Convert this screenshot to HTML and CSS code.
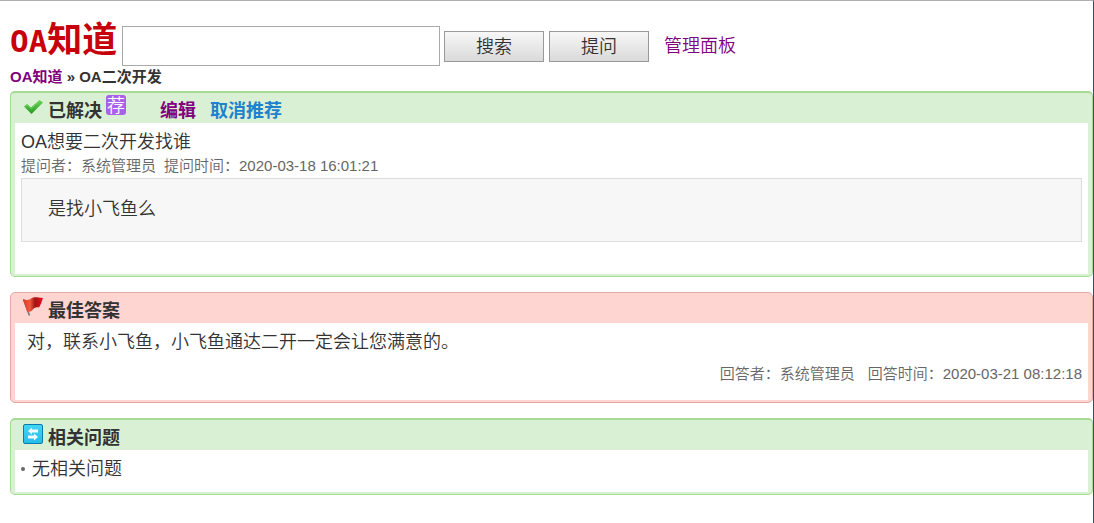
FILE: index.html
```html
<!DOCTYPE html>
<html lang="zh-CN">
<head>
    <meta charset="UTF-8">
    <meta name="viewport" content="width=device-width, initial-scale=1.0">
    <title>OA知道</title>
    <link rel="stylesheet" href="styles.css">
</head>
<body>
    <form class="search-bar" onsubmit="return false">
        <div class="logo"><span class="logo-en">OA</span>知道</div>
        <input class="search-input" type="text" aria-label="搜索">
        <button class="btn" type="submit">搜索</button>
        <button class="btn" type="button">提问</button>
        <a class="manage" href="#">管理面板</a>
    </form>

    <div class="crumb"><a href="#">OA知道</a> » OA二次开发</div>

    <div class="panel green">
        <div class="panel-title">
            <svg class="icon" width="20" height="20" viewBox="0 0 20 20">
                <defs>
                    <linearGradient id="tick" x1="0" y1="0" x2="0" y2="1">
                        <stop offset="0" stop-color="#6fd45c"/>
                        <stop offset="1" stop-color="#249a20"/>
                    </linearGradient>
                </defs>
                <path d="M1 9.5 4 7l4 3.5L16.5 3 20 5.5 8.5 17z" fill="url(#tick)"/>
                <path d="M2 9.5 4.2 8 8 11.5 16.5 4" fill="none" stroke="#6fd05c" stroke-width="1"/>
            </svg>
            <h2>已解决</h2>
            <span class="tag">荐</span>
            <a class="edit" href="#">编辑</a>
            <a class="cancel" href="#">取消推荐</a>
        </div>
        <div class="panel-body ask">
            <div class="question">OA想要二次开发找谁</div>
            <div class="info"><span>提问者：系统管理员</span><span>提问时间：2020-03-18 16:01:21</span></div>
            <div class="detail">是找小飞鱼么</div>
        </div>
    </div>

    <div class="panel red">
        <div class="panel-title">
            <svg class="icon" width="20" height="20" viewBox="0 0 20 20">
                <defs>
                    <linearGradient id="flag" x1="0" y1="0" x2="1" y2="0">
                        <stop offset="0" stop-color="#d83a28"/>
                        <stop offset="0.35" stop-color="#f0583c"/>
                        <stop offset="0.6" stop-color="#a01414"/>
                        <stop offset="0.8" stop-color="#c81018"/>
                        <stop offset="1" stop-color="#f00c2c"/>
                    </linearGradient>
                </defs>
                <path d="M.5 2.5 6.5 18.5" stroke="#777" stroke-width="1.6"/>
                <path d="M0 2c3 1 5.500 1.500 8-.5 3-2 6-1 12-.5-1.500 4-2 6.500-4 9.500-3-.5-5 0-7 3-1.500 1.500-3 1.500-5 1z" fill="url(#flag)"/>
            </svg>
            <h2>最佳答案</h2>
        </div>
        <div class="panel-body answer">
            <div class="answer-text">对，联系小飞鱼，小飞鱼通达二开一定会让您满意的。</div>
            <div class="info right"><span>回答者：系统管理员</span><span>回答时间：2020-03-21 08:12:18</span></div>
        </div>
    </div>

    <div class="panel green">
        <div class="panel-title">
            <svg class="icon" width="20" height="20" viewBox="0 0 20 20">
                <defs>
                    <linearGradient id="swap" x1="0" y1="0" x2="0" y2="1">
                        <stop offset="0" stop-color="#45d6f6"/>
                        <stop offset="1" stop-color="#25bcea"/>
                    </linearGradient>
                </defs>
                <rect x=".5" y=".5" width="19" height="19" rx="1.500" fill="url(#swap)" stroke="#0a7cae"/>
                <path d="M5 7 9 3.500V5.500h6v3H9v2zM15 13l-4-3.500v2H5v3h6v2z" fill="#f2fdff"/>
            </svg>
            <h2>相关问题</h2>
        </div>
        <div class="panel-body related">
            <ul>
                <li>无相关问题</li>
            </ul>
        </div>
    </div>
</body>
</html>
```
FILE: styles.css
```css
* { box-sizing: border-box; }
html { min-height: 100%; display: flex; background: #fff; }
body { flex: 1; margin: 0; padding: 25px 0 0 10px; border-top: 1px solid #b0b0b0; border-right: 1px solid #34505f; font: 350 18px/24px "Liberation Sans", "Noto Sans CJK SC", sans-serif; color: #333; }
a { color: #800080; text-decoration: none; }

/* search */
.search-bar { display: flex; align-items: center; height: 40px; }
.logo { width: 112px; padding-bottom: 14px; font: bold 35px/40px "Noto Sans CJK SC", sans-serif; color: #c7000b; white-space: nowrap; }
.logo-en { font-family: "DejaVu Sans Mono", monospace; font-size: 31px; }
.search-input { width: 318px; height: 40px; border: 1px solid #a9a9a9; padding: 0 5px; font-size: 18px; }
.btn { width: 100px; height: 31px; margin-left: 4px; padding: 2px 0 0; border: 1px solid #999; background: linear-gradient(#f7f7f7, #dadada); font: inherit; color: #333; cursor: pointer; }
.btn + .btn { margin-left: 5px; }
.manage { margin-left: 15px; }

.crumb { margin-bottom: 3px; font-size: 15px; line-height: 22px; font-weight: bold; }

/* panels */
.panel { margin-bottom: 15px; border: 1px solid; border-radius: 5px; padding: 0 4px 2px; }
.green { border-color: #a5db94; border-top-width: 2px; background: #daf0d4; }
.red { border-color: #e3a9a5; background: #fed5d1; }
.panel-title { display: flex; align-items: center; height: 30px; padding-left: 8px; }
.panel-title h2 { margin: 0 0 0 5px; padding-top: 5px; font-size: 18px; }
.panel-title a { padding-top: 5px; font-weight: bold; }
.icon { margin-bottom: 2px; }
.tag { width: 20px; height: 20px; margin: 0 34px 6px 4px; border-radius: 3px; background: #a862ea; color: #fff; font-size: 18px; line-height: 22px; text-align: center; }
.panel-title .cancel { margin-left: 14px; color: #1e82cc; }
.panel-body { background: #fff; padding: 7px 6px 6px; }

.ask { padding-bottom: 32px; }
.info { display: flex; gap: 8px; font-size: 15px; line-height: 24px; color: #666; }
.detail { border: 1px solid #dcdcdc; background: #f7f7f7; padding: 18px 26px 20px; }
.answer { padding-bottom: 14px; }
.answer-text { padding-left: 6px; margin-bottom: 8px; }
.right { justify-content: flex-end; gap: 13px; }
.related ul { margin: 0; padding: 0 0 5px; list-style: none; }
.related li { display: flex; align-items: center; gap: 7px; }
.related li::before { content: ""; width: 4px; height: 4px; border-radius: 2px; background: #666; }
```
